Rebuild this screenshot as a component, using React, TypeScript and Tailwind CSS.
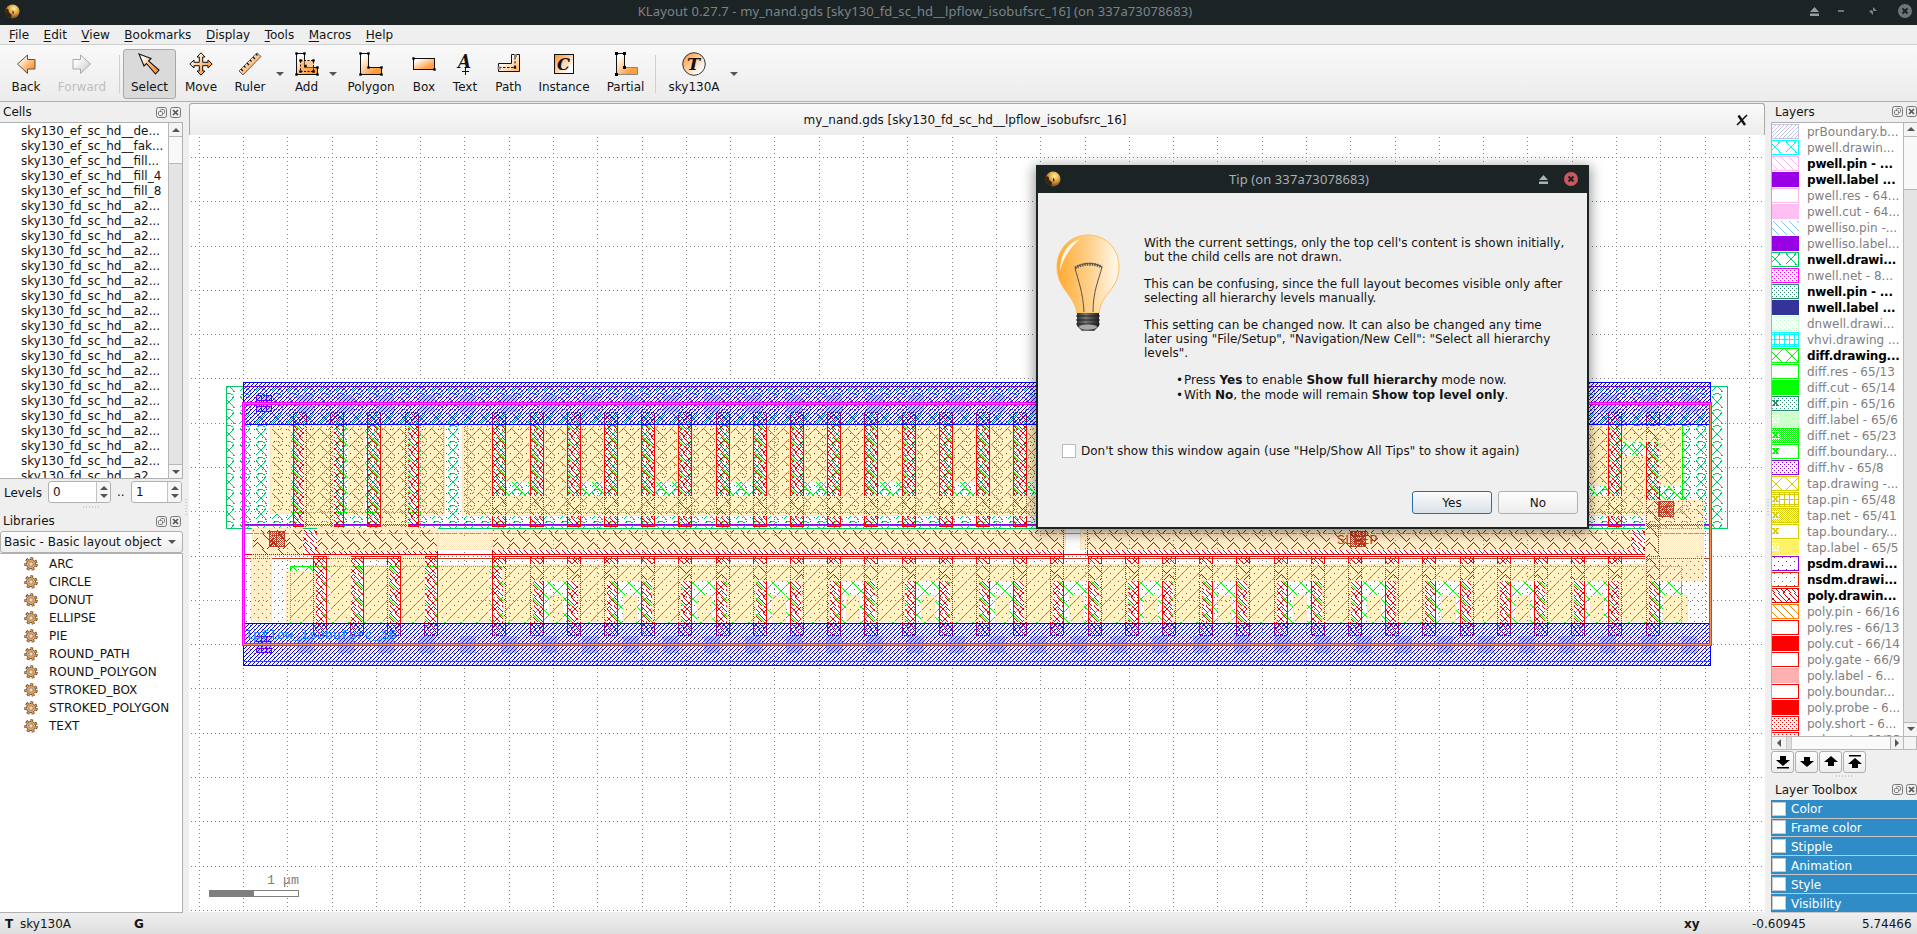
import React from "react";

type Pred = (x: number, y: number) => boolean;
const mod = (a: number, n: number) => ((a % n) + n) % n;

function pixels(w: number, h: number, f: Pred) {
  let d = "";
  for (let y = 0; y < h; y++)
    for (let x = 0; x < w; x++) if (f(x, y)) d += `M${x} ${y}h1v1h-1z`;
  return d;
}

function Stipple({ id, n, color, f }: { id: string; n: number; color: string; f: Pred }) {
  return (
    <pattern id={id} width={n} height={n} patternUnits="userSpaceOnUse">
      <path d={pixels(n, n, f)} fill={color} shapeRendering="crispEdges" />
    </pattern>
  );
}

const WELL = [
  "...#......#.....",
  "....#....#......",
  ".....#..#.......",
  "......##........",
  "......##........",
  ".....#..#.......",
  "....#....#......",
  "...#......#.....",
  "..#........#....",
  "...........##...",
  "................",
  ".....####.......",
  "...##....##.....",
  "................",
  "..#........#....",
  "..##......##....",
];
const wellAt =
  (dx: number, dy: number): Pred =>
  (x, y) =>
    WELL[mod(y + dy, 16)][mod(x + dx, 16)] === "#";
const diamondAt =
  (a: number, b: number): Pred =>
  (x, y) =>
    mod(x + y, 16) === a || mod(x - y, 16) === b;
const slash4: Pred = (x, y) => mod(x + y, 4) === 0;
const back5: Pred = (x, y) => mod(x - y, 8) === 0;
const check: Pred = (x, y) => mod(x + y, 2) === 0;
const sparse: Pred = (x, y) => (x === 2 && y === 1) || (x === 6 && y === 5);
const dots4: Pred = (x, y) => (x === 0 && y === 0) || (x === 2 && y === 2);
const net: Pred = (x, y) => x % 5 === 2 || y % 5 === 2;
// Broken left hatch with a short counter stroke in each half of the tile.
const poly: Pred = (x, y) => {
  const back = mod(x - y, 16);
  const fwd = mod(x + y, 16);
  if (y >= 5 && y <= 13) return back === 1 || back === 6 || back === 12 || (fwd === 11 && y >= 10);
  return back === 3 || back === 8 || back === 14 || fwd === 15;
};

const FONT = "font-['DejaVu_Sans',sans-serif]";

function Defs() {
  return (
    <svg className="absolute h-0 w-0">
      <defs>
        <Stipple id="well" n={16} color="#00cc66" f={wellAt(2, 2)} />
        <Stipple id="wellG" n={16} color="#00cc66" f={wellAt(4, -3)} />
        <Stipple id="wellC" n={16} color="#00ffff" f={wellAt(4, -3)} />
        <Stipple id="diff" n={16} color="#00ff00" f={diamondAt(11, 14)} />
        <Stipple id="diffG" n={16} color="#00ff00" f={diamondAt(11, 12)} />
        <Stipple id="diffY" n={16} color="#d9cc00" f={diamondAt(11, 12)} />
        <Stipple id="met" n={4} color="#0000ff" f={slash4} />
        <Stipple id="prb" n={4} color="#c4c4dc" f={slash4} />
        <Stipple id="backP" n={8} color="#ffb8f0" f={back5} />
        <Stipple id="backB" n={8} color="#80bfff" f={back5} />
        <Stipple id="backO" n={8} color="#ff8000" f={back5} />
        <Stipple id="li" n={2} color="#ffe6bf" f={check} />
        <Stipple id="liDiff" n={2} color="#ffebba" f={check} />
        <Stipple id="checkG" n={2} color="#00ff00" f={check} />
        <Stipple id="checkY" n={2} color="#d9cc00" f={check} />
        <Stipple id="checkBr" n={2} color="#bf4026" f={check} />
        <Stipple id="sparseP" n={8} color="#9900e6" f={sparse} />
        <Stipple id="sparseR" n={8} color="#bf4026" f={sparse} />
        <Stipple id="dotsM" n={4} color="#ff00ff" f={dots4} />
        <Stipple id="dotsT" n={4} color="#268c6b" f={dots4} />
        <Stipple id="dotsL" n={4} color="#ccffd9" f={dots4} />
        <Stipple id="dotsV" n={4} color="#9900e6" f={dots4} />
        <Stipple id="dotsR" n={4} color="#ff0000" f={dots4} />
        <Stipple id="netC" n={5} color="#00ffff" f={net} />
        <Stipple id="netY" n={5} color="#d9cc00" f={net} />
        <Stipple id="poly" n={16} color="#e60000" f={poly} />
        <linearGradient id="or" x1="0" y1="0" x2="1" y2="1">
          <stop offset="0.15" stopColor="#fff" />
          <stop offset="0.75" stopColor="#ff9d3c" />
        </linearGradient>
        <linearGradient id="orR" x1="1" y1="1" x2="0" y2="0">
          <stop offset="0.2" stopColor="#fff" />
          <stop offset="0.9" stopColor="#ff9d3c" />
        </linearGradient>
        <linearGradient id="orSoft" x1="0" y1="0" x2="1" y2="1">
          <stop offset="0.3" stopColor="#fff" />
          <stop offset="1" stopColor="#ffb060" />
        </linearGradient>
        <linearGradient id="gy" x1="0" y1="0" x2="1" y2="1">
          <stop offset="0.2" stopColor="#fff" />
          <stop offset="1" stopColor="#c8c8c8" />
        </linearGradient>
        <radialGradient id="gold" cx="0.6" cy="0.3" r="0.8">
          <stop offset="0" stopColor="#fff0a0" />
          <stop offset="0.45" stopColor="#e0a040" />
          <stop offset="1" stopColor="#4a2c10" />
        </radialGradient>
        <linearGradient id="bulb" x1="0" y1="0" x2="1" y2="0">
          <stop offset="0" stopColor="#ffa92e" />
          <stop offset="0.55" stopColor="#ffd391" />
          <stop offset="1" stopColor="#fffaf2" />
        </linearGradient>
        <linearGradient id="screw" x1="0" y1="0" x2="1" y2="0">
          <stop offset="0" stopColor="#333" />
          <stop offset="0.4" stopColor="#777" />
          <stop offset="1" stopColor="#222" />
        </linearGradient>
      </defs>
    </svg>
  );
}

/* ---------- layout view ---------- */

const P = 44.29;
function gridPath() {
  let d = "";
  for (let k = -1; k <= 34; k++) {
    const x = Math.round(243 + P * k);
    for (let j = -6; j < 190; j++) {
      const y = Math.round(157 + (P / 11) * j);
      d += `M${x} ${y}h1v1h-1z`;
    }
  }
  for (let k = 0; k <= 17; k++) {
    const y = Math.round(157 + P * k);
    for (let j = -14; j < 380; j++) {
      const x = Math.round(243 + (P / 11) * j);
      d += `M${x} ${y}h1v1h-1z`;
    }
  }
  return d;
}

type Box = [number, number, number, number];
function Boxes({ list, fill, stroke }: { list: Box[]; fill: string; stroke?: string }) {
  return (
    <>
      {list.map(([x0, y0, x1, y1], i) => (
        <rect
          key={i}
          x={x0 + 0.5}
          y={y0 + 0.5}
          width={x1 - x0}
          height={y1 - y0}
          fill={fill}
          stroke={stroke ?? "none"}
        />
      ))}
    </>
  );
}

const gateX = (k: number) => Math.round(492.3 + 37.2 * k);
const gates = Array.from({ length: 32 }, (_, k) => gateX(k));
const topGates: Box[] = [293, 330, 367, 405, ...gates].map((x) => [x, 412, x + 13, 526]);
const botGates: Box[] = [313, 350, 387, 424, ...gates].map((x) => [x, 556, x + 13, 635]);

const liTop: Box[] = [
  [270, 425, 290, 513],
  [304, 425, 333, 527],
  [348, 425, 364, 515],
  [381, 425, 407, 527],
  [421, 425, 444, 515],
  [462, 425, 491, 496],
  [462, 496, 1644, 515],
];
const liBot: Box[] = [
  [286, 571, 315, 621],
  [330, 556, 350, 621],
  [364, 565, 388, 621],
  [401, 556, 424, 621],
  [438, 565, 488, 621],
  [502, 564, 1644, 580],
  [1663, 595, 1687, 621],
];
for (let k = 0; k < 31; k++) {
  const a = gateX(k) + 14;
  const b = gateX(k + 1) - 1;
  if (k === 30) {
    liTop.push([a, 426, b + 24, 441], [a, 456, b, 496]);
  } else if (k === 29) {
    liTop.push([a, 425, b, 485]);
  } else liTop.push([a, 425, b, k % 2 === 0 ? 481 : 496]);
  if (k % 2 === 0) liBot.push([a - 3, 580, b + 3, 621]);
  else liBot.push([a + 5, 595, b - 4, 621]);
}
liTop.push([1659, 426, 1681, 485]);

const liMid: Box[] = [
  [252, 528, 302, 555],
  [317, 528, 437, 550],
  [438, 531, 491, 549],
  [492, 529, 1065, 549],
  [1080, 529, 1630, 549],
  [251, 555, 271, 621],
  [1645, 500, 1703, 580],
];

const contacts: number[] = Array.from({ length: 35 }, (_, i) => Math.round(297 + 40.72 * i));

function LayoutView() {
  return (
    <svg
      className="block h-[777px] w-[1576px] bg-white"
      viewBox="189 135 1576 777"
      shapeRendering="crispEdges"
    >
      <path d={gridPath()} fill="#7f7f7f" />
      <Boxes list={[[226, 386, 1727, 528]]} fill="url(#well)" stroke="#00cc66" />
      <Boxes list={[[290, 424, 443, 512], [467, 424, 1682, 512], [290, 566, 1681, 623]]} fill="url(#diff)" stroke="#00ff00" />
      <Boxes list={[[243, 386, 1710, 524]]} fill="url(#sparseP)" stroke="#9900e6" />
      <Boxes list={[[243, 525, 1710, 661]]} fill="none" stroke="#bf4026" />
      <Boxes list={[[243, 558, 1710, 661]]} fill="url(#sparseR)" />
      <path d="M243 558.5H1710" stroke="#bf4026" />
      <path d="M243 528.5H1710" stroke="#00cc66" strokeDasharray="8 3" />
      <path d="M243 533.5H1710" stroke="#ff8000" strokeDasharray="7 1" />
      <Boxes list={[[252, 529, 437, 554], [492, 529, 1063, 554], [1087, 529, 1645, 554]]} fill="url(#poly)" />
      <Boxes list={topGates} fill="url(#poly)" stroke="#ff0000" />
      <Boxes list={botGates} fill="url(#poly)" stroke="#ff0000" />
      <Boxes list={[[1645, 526, 1658, 556]]} fill="url(#poly)" stroke="#ff0000" />
      <path
        d="M243 554.5H1645 M492.5 529V556 M437.5 529V556 M1063.5 529V556 M1087.5 529V556 M252.5 529V554 M363 556.5H388 M506 556.5H1050 M1100 556.5H1645"
        stroke="#e60000"
        fill="none"
      />
      <Boxes list={liTop} fill="url(#liDiff)" stroke="#ffe6bf" />
      <Boxes list={liMid} fill="url(#li)" stroke="#ffe6bf" />
      <Boxes list={liBot} fill="url(#liDiff)" stroke="#ffe6bf" />
      <Boxes list={[[243, 394, 1710, 413], [243, 634, 1710, 653]]} fill="url(#li)" />
      <path d="M243 533.5H1710" stroke="#ff8000" strokeDasharray="4 2" />
      {contacts.map((x) => (
        <React.Fragment key={x}>
          <rect x={x} y="395" width="16" height="17" fill="#ccccf0" />
          <rect x={x} y="636" width="16" height="17" fill="#ccccf0" />
        </React.Fragment>
      ))}
      <rect x="256" y="395" width="16" height="17" fill="#ccccf0" />
      <rect x="256" y="636" width="16" height="17" fill="#ccccf0" />
      <Boxes list={[[243, 382, 1710, 424], [243, 623, 1710, 665]]} fill="url(#met)" stroke="#0000ff" />
      <path d="M243 661.5H1710" stroke="#99336b" />
      <path d="M243 386.5H1710" stroke="#6600e6" />
      <path
        d="M256 395.5h5M263 395.500h9M256 400.5h16M256 406.5h16M256 411.5h16M256.5 395v17M261.5 395v17M266.5 395v17M271.5 395v17M256 636.5h16M256 641.5h16M256 648.5h16M256 652.5h16M256.5 648v5M261.5 636v17M266.5 636v17M271.5 648v5"
        stroke="#6600ff"
      />
      <Boxes list={[[269, 531, 284, 546], [1350, 531, 1365, 546], [1658, 501, 1673, 516]]} fill="url(#checkBr)" stroke="#bf4026" />
      <path d="M272 535h10M272 541h8M276 533v12M281 534v6M1353 536h11M1353 541h11M1355 532v14M1361 532v14M1661 506h10M1661 512h8M1666 504v10" stroke="#bf4026" strokeWidth="1" />
      <text x="1337" y="543.5" fontSize="13.5" className="font-['Liberation_Mono',monospace]" fill="#bf4026">SLEEP</text>
      <text x="245" y="639" fontSize="13.3" className="font-['Liberation_Mono',monospace]" fill="#0080ff">lpflow_isobufsrc_16</text>
      <rect x="243.5" y="403.5" width="1467" height="241" fill="none" stroke="#ff00ff" strokeWidth="3" />
      <rect x="243.5" y="403.5" width="1467" height="241" fill="none" stroke="#ff9050" strokeWidth="1" />
      <text x="267" y="884" fontSize="13.3" className="font-['Liberation_Mono',monospace]" fill="#7f7f7f">1 μm</text>
      <rect x="209.5" y="890.5" width="89" height="6" fill="#fff" stroke="#7f7f7f" />
      <rect x="209" y="890" width="45" height="7" fill="#7f7f7f" />
    </svg>
  );
}

/* ---------- toolbar ---------- */

function Handle({ pts }: { pts: [number, number][] }) {
  return (
    <>
      {pts.map(([x, y], i) => (
        <rect key={i} x={x - 1.2} y={y - 1.2} width="2.4" height="2.4" fill="#000" />
      ))}
    </>
  );
}

const icons: Record<string, React.ReactNode> = {
  Back: <path d="M3.5 12 13.5 3v4.500h7.500v9.500h-7.500v4.500z" fill="url(#or)" stroke="#555" />,
  Forward: <path d="M20.500 12 10.500 3v4.500H3v9.500h7.500v4.500z" fill="url(#gy)" stroke="#aaa" />,
  Select: <path d="M1 2 13 6.500 10.500 9l10.500 9-3.500 4L8.500 11.500 6 14z" fill="url(#or)" stroke="#111" strokeWidth="1.100" />,
  Move: <path d="M12 .8 16 5H13.700v5.300H19V8l4.200 4L19 16v-2.300h-5.300V19H16l-4 4.200L8 19h2.300v-5.300H5V16L.8 12 5 8v2.300h5.300V5H8z" fill="url(#or)" stroke="#111" />,
  Ruler: (
    <g>
      <path d="M1 19 19 .8 23 4.500 5 23z" fill="url(#or)" stroke="#666" />
      <path d="m3 17 2 2M6 14l1.500 1.500M9 11l2 2M12 8l1.500 1.500M15 5l2 2M18 2l1.500 1.500" stroke="#111" strokeWidth="1.200" />
    </g>
  ),
  Add: (
    <g>
      <path d="M1.500 1.500h8v14h13v7h-21z" fill="url(#or)" stroke="#111" />
      <path d="M5.500 8.500h13v11h-13z" fill="#ff9d3c" fillOpacity="0.500" stroke="#111" strokeDasharray="2 1.500" />
      <Handle pts={[[1.5, 1.5], [9.5, 1.5], [1.5, 22.5], [22.5, 22.5], [22.5, 15.5], [5.5, 8.5], [18.5, 8.5], [5.5, 19.5], [18.5, 19.5], [10.5, 14]]} />
    </g>
  ),
  Polygon: (
    <g>
      <path d="M1.500 1.500h8v14h13v7h-21z" fill="url(#or)" stroke="#111" />
      <Handle pts={[[1.5, 1.5], [9.5, 1.5], [9.5, 15.5], [1.5, 22.5], [22.5, 22.5], [22.5, 15.5]]} />
    </g>
  ),
  Box: (
    <g>
      <rect x="1.500" y="6.500" width="21" height="11" fill="url(#or)" stroke="#111" />
      <Handle pts={[[1.5, 6.5], [22.5, 17.5]]} />
    </g>
  ),
  Text: (
    <g>
      <text x="5" y="16" fontSize="18" className="font-['DejaVu_Serif',serif]" fontWeight="700" fontStyle="italic" textLength="13" lengthAdjust="spacingAndGlyphs" fill="#111">A</text>
      <path d="M12.500 16v7M9 19.500h7" stroke="#111" />
    </g>
  ),
  Path: (
    <g>
      <path d="M1.500 11.500h13v-9h8v17h-21z" fill="url(#orSoft)" stroke="#111" />
      <path d="M2 15.500h16V3" fill="none" stroke="#111" strokeDasharray="2.500 1.500" />
      <Handle pts={[[18, 15.5]]} />
      <path d="M17 2h3v3h-3zM.5 14.500h3v3h-3z" fill="#888" />
    </g>
  ),
  Instance: (
    <g>
      <rect x="2.500" y="2.500" width="19" height="19" fill="url(#orR)" stroke="#111" />
      <text x="5" y="17.500" fontSize="16" className="font-['DejaVu_Serif',serif]" fontWeight="700" fontStyle="italic" textLength="13" lengthAdjust="spacingAndGlyphs" fill="#111">C</text>
    </g>
  ),
  Partial: (
    <g>
      <path d="M2.500 1.500h8v14h13v7h-21z" fill="url(#or)" />
      <path d="M10.500 15.500h13v7h-21" fill="none" stroke="#888" />
      <path d="M2.500 22.500v-21h8v14" fill="none" stroke="#111" />
      <rect x="1" y="0" width="3" height="3" />
      <rect x="9" y="0" width="3" height="3" />
      <rect x="9" y="14" width="3" height="3" />
      <rect x="1" y="21" width="3" height="3" />
    </g>
  ),
  sky130A: (
    <g>
      <circle cx="12" cy="12" r="11.300" fill="url(#orR)" stroke="#333" />
      <text x="5" y="17.500" fontSize="16" className="font-['DejaVu_Serif',serif]" fontWeight="700" fontStyle="italic" textLength="13" lengthAdjust="spacingAndGlyphs" fill="#111">T</text>
    </g>
  ),
};

function Tool({ name, w, state }: { name: string; w: string; state?: "on" | "off" }) {
  return (
    <div
      className={`flex h-[50px] flex-col items-center border pt-[2px] ${w} ${
        state === "on" ? "rounded-[3px] border-[#a8a8a8] bg-[#dadada]" : "border-transparent"
      }`}
    >
      <svg width="24" height="24" viewBox="0 0 24 24">{icons[name]}</svg>
      <span className={`mt-[3px] leading-[16px] whitespace-nowrap ${state === "off" ? "text-[#bebebe]" : ""}`}>{name}</span>
    </div>
  );
}

const Drop = ({ w }: { w: string }) => (
  <div className={`flex h-[50px] justify-center pt-[23px] ${w}`}>
    <svg width="8" height="4"><path d="M0 0h8L4 4z" fill="#555" /></svg>
  </div>
);

function Toolbar() {
  return (
    <div className="flex h-[57px] border-b border-[#b0b0b0] bg-linear-to-b from-[#f9f9f9] to-[#ececec] pt-[4px]">
      <Tool name="Back" w="w-[52px]" />
      <Tool name="Forward" w="w-[60px]" state="off" />
      <div className="mt-[6px] mr-[3px] ml-[7px] h-[38px] w-px bg-[#cfcfcf]" />
      <Tool name="Select" w="w-[53px]" state="on" />
      <Tool name="Move" w="w-[50px]" />
      <Tool name="Ruler" w="w-[48px]" />
      <Drop w="w-[12px]" />
      <Tool name="Add" w="w-[41px]" />
      <Drop w="w-[12px]" />
      <Tool name="Polygon" w="w-[64px]" />
      <Tool name="Box" w="w-[42px]" />
      <Tool name="Text" w="w-[40px]" />
      <Tool name="Path" w="w-[47px]" />
      <Tool name="Instance" w="w-[64px]" />
      <Tool name="Partial" w="w-[59px]" />
      <div className="mt-[6px] mr-[3px] h-[38px] w-px bg-[#cfcfcf]" />
      <Tool name="sky130A" w="w-[70px]" />
      <Drop w="w-[10px]" />
    </div>
  );
}

/* ---------- shared bits ---------- */

const Logo = ({ s }: { s: number }) => (
  <svg width={s} height={s} viewBox="0 0 16 16">
    <circle cx="8" cy="8" r="7.500" fill="url(#gold)" />
    <path d="M1 6c2-2 3 0 3 2s3 2 3 4-1 3-2 3C2 13 0 10 1 6zM8 7c1 0 2 2 1 4l-1-1z" fill="#3a2410" />
  </svg>
);

function DockHeader({ title, pad }: { title: string; pad: string }) {
  return (
    <div className={`flex h-[20px] items-center justify-between ${pad}`}>
      <span className="leading-[16px]">{title}</span>
      <svg width="25" height="11" viewBox="0 0 25 11" fill="none" stroke="#777">
        <rect x=".5" y=".5" width="10" height="10" rx="2" />
        <rect x="4.500" y="2.500" width="4" height="4" rx="1" />
        <rect x="2.500" y="4.500" width="4" height="4" rx="1" fill="#efefef" />
        <rect x="14.500" y=".5" width="10" height="10" rx="2" />
        <path d="m17 3 5 5m0-5-5 5" stroke="#555" strokeWidth="1.700" />
      </svg>
    </div>
  );
}

const Tri = ({ dir, c = "#555" }: { dir: "u" | "d" | "l" | "r"; c?: string }) => (
  <svg width="8" height="8" viewBox="0 0 8 8">
    <path d={{ u: "M0 6h8L4 2z", d: "M0 2h8L4 6z", l: "M6 0v8L2 4z", r: "M2 0v8l4-4z" }[dir]} fill={c} />
  </svg>
);

function VScroll({ thumb }: { thumb: string }) {
  return (
    <div className="flex w-[14px] shrink-0 flex-col border-l border-[#b8b8b8] bg-[#e4e4e4]">
      <div className="flex h-[14px] items-center justify-center border-b border-[#b8b8b8] bg-[#f4f4f4]"><Tri dir="u" /></div>
      <div className={`border-b border-[#b8b8b8] bg-[#f8f8f8] ${thumb}`} />
      <div className="grow" />
      <div className="flex h-[14px] items-center justify-center border-t border-[#b8b8b8] bg-[#f4f4f4]"><Tri dir="d" /></div>
    </div>
  );
}

const Grip = () => (
  <svg width="17" height="2"><path d="M0 1h17" stroke="#aaa" strokeDasharray="1 2" /></svg>
);

/* ---------- left side ---------- */

const cells = ["ef_sc_hd__de...", "ef_sc_hd__fak...", "ef_sc_hd__fill...", "ef_sc_hd__fill_4", "ef_sc_hd__fill_8", ...Array(19).fill("fd_sc_hd__a2...")];
const shapes = ["ARC", "CIRCLE", "DONUT", "ELLIPSE", "PIE", "ROUND_PATH", "ROUND_POLYGON", "STROKED_BOX", "STROKED_POLYGON", "TEXT"];

function Spin({ value, w }: { value: string; w: string }) {
  return (
    <div className={`flex h-[22px] overflow-hidden rounded-[3px] border border-[#b0b0b0] bg-white ${w}`}>
      <span className="grow pl-[4px] leading-[20px]">{value}</span>
      <span className="flex w-[14px] flex-col items-center justify-center border-l border-[#c4c4c4] bg-[#f6f6f6]">
        <Tri dir="u" /><Tri dir="d" />
      </span>
    </div>
  );
}

const Gear = () => (
  <svg width="14" height="14" viewBox="0 0 14 14">
    <circle cx="7" cy="7" r="5.200" fill="none" stroke="#4a3a2a" strokeWidth="3" strokeDasharray="2.600 2.070" />
    <circle cx="7" cy="7" r="4.600" fill="#f2a452" stroke="#5a4632" strokeWidth=".8" />
    <circle cx="7" cy="7" r="5.200" fill="none" stroke="#f2a452" strokeWidth="1.600" strokeDasharray="1.600 3.070" strokeDashoffset="-.5" />
    <circle cx="7" cy="7" r="2.200" fill="#ddd" stroke="#888" />
  </svg>
);

function LeftDock() {
  return (
    <div className="flex w-[183px] flex-col">
      <DockHeader title="Cells" pad="pl-[3px] pr-[2px]" />
      <div className="flex h-[357px] border-y border-r border-[#b0b0b0] bg-white">
        <div className="grow overflow-hidden pl-[21px]">
          {cells.map((c, i) => (
            <div key={i} className="h-[15px] leading-[16px] whitespace-nowrap">sky130_{c}</div>
          ))}
        </div>
        <VScroll thumb="h-[27px]" />
      </div>
      <div className="mt-[2px] flex h-[22px] items-center">
        <span className="w-[48px] pt-px pl-[4px]">Levels</span>
        <Spin value="0" w="w-[63px]" />
        <span className="w-[20px] pl-[6px]">..</span>
        <Spin value="1" w="w-[51px]" />
      </div>
      <div className="flex h-[8px] items-center justify-center"><Grip /></div>
      <DockHeader title="Libraries" pad="pl-[3px] pr-[2px]" />
      <div className="flex h-[22px] items-center justify-between overflow-hidden rounded-[3px] border border-[#b0b0b0] bg-linear-to-b from-[#fdfdfd] to-[#ededed] pr-[6px] pl-[3px]">
        <span className="whitespace-nowrap">Basic - Basic layout object</span>
        <Tri dir="d" />
      </div>
      <div className="h-[360px] border-y border-r border-[#b0b0b0] bg-white pt-[1px]">
        {shapes.map((s) => (
          <div key={s} className="flex h-[18px] items-center pl-[24px]">
            <Gear /><span className="pl-[11px]">{s}</span>
          </div>
        ))}
      </div>
    </div>
  );
}

/* ---------- right side ---------- */

// name, fill, frame, bold, marker colour
const layers: [string, string, string, boolean?, string?][] = [
  ["prBoundary.b...", "url(#prb)", "#c4c4dc"],
  ["pwell.drawin...", "url(#wellC)", "#00ffff"],
  ["pwell.pin - ...", "url(#backP)", "#ffb8f0", true],
  ["pwell.label ...", "#9900e6", "#9900e6", true],
  ["pwell.res - 64...", "#fff", "#ffb8f0"],
  ["pwell.cut - 64...", "#ffbff2", "#ffbff2"],
  ["pwelliso.pin -...", "url(#backB)", "none"],
  ["pwelliso.label...", "#9900e6", "#9900e6"],
  ["nwell.drawi...", "url(#wellG)", "#00cc66", true],
  ["nwell.net - 8...", "url(#dotsM)", "#ff00ff"],
  ["nwell.pin - ...", "url(#dotsT)", "#268c6b", true],
  ["nwell.label ...", "#333399", "#333399", true],
  ["dnwell.drawi...", "url(#dotsL)", "#ccffd9"],
  ["vhvi.drawing ...", "url(#netC)", "#00ffff"],
  ["diff.drawing...", "url(#diffG)", "#00ff00", true],
  ["diff.res - 65/13", "#fff", "#00ff00"],
  ["diff.cut - 65/14", "#00ff00", "#00ff00"],
  ["diff.pin - 65/16", "url(#dotsT)", "#268c6b", false, "#268c6b"],
  ["diff.label - 65/6", "#ccffcc", "#ccffcc", false, "#ccffcc"],
  ["diff.net - 65/23", "url(#checkG)", "#00ff00", false, "#00ff00"],
  ["diff.boundary...", "#fff", "#00ff00", false, "#00ff00"],
  ["diff.hv - 65/8", "url(#dotsV)", "#9900e6"],
  ["tap.drawing -...", "url(#diffY)", "#d9cc00"],
  ["tap.pin - 65/48", "url(#netY)", "#d9cc00", false, "#d9cc00"],
  ["tap.net - 65/41", "url(#checkY)", "#d9cc00", false, "#d9cc00"],
  ["tap.boundary...", "#fff", "#d9cc00", false, "#d9cc00"],
  ["tap.label - 65/5", "#fff266", "#fff266", false, "#fff266"],
  ["psdm.drawi...", "url(#sparseP)", "#9900e6", true],
  ["nsdm.drawi...", "url(#sparseR)", "#e62600", true],
  ["poly.drawin...", "url(#poly)", "#e60000", true],
  ["poly.pin - 66/16", "url(#backO)", "#ff8000"],
  ["poly.res - 66/13", "#fff", "#ff0000"],
  ["poly.cut - 66/14", "#ff0000", "#ff0000"],
  ["poly.gate - 66/9", "#fff", "#ff0000"],
  ["poly.label - 6...", "#ffb0b0", "#ffb0b0"],
  ["poly.boundar...", "#fff", "#ff0000"],
  ["poly.probe - 6...", "#ff0000", "#ff0000"],
  ["poly.short - 6...", "url(#dotsR)", "#ff0000"],
  ["poly.net - 66/23", "url(#dotsR)", "#ff0000"],
];

function RightDock() {
  return (
    <div className="flex w-[146px] flex-col">
      <DockHeader title="Layers" pad="pl-[4px]" />
      <div className="flex h-[614px] border-t border-l border-[#b0b0b0] bg-white">
        <div className="w-[132px] overflow-hidden pt-px">
          {layers.map(([name, fill, frame, bold, mark]) => (
            <div key={name} className="flex h-[16px]">
              <svg width="27" height="15" className="shrink-0" shapeRendering="crispEdges">
                <rect x="-.5" y=".5" width="27" height="14" fill={fill} stroke={frame} />
                {mark && (
                  <g>
                    <rect x="0" y="3" width="7" height="8" fill="#fff" />
                    <path d="m1 4 5 6m0-6-5 6" stroke={mark} strokeWidth="1.800" />
                  </g>
                )}
              </svg>
              <span className={`pl-[8px] leading-[16px] whitespace-nowrap ${bold ? "font-bold tracking-[-0.2px] text-black" : "text-[#808080]"}`}>{name}</span>
            </div>
          ))}
        </div>
        <VScroll thumb="h-[53px]" />
      </div>
      <div className="flex h-[14px] border border-[#b8b8b8] bg-[#f4f4f4]">
        <div className="flex w-[14px] items-center justify-center"><Tri dir="l" /></div>
        <div className="w-[6px] border-x border-[#c8c8c8] bg-[#e0e0e0]" />
        <div className="w-[99px] border-r border-[#b8b8b8] bg-[#fafafa]" />
        <div className="flex w-[13px] items-center justify-center border-r border-[#b8b8b8]"><Tri dir="r" /></div>
      </div>
      <div className="mt-[1px] flex gap-[1px]">
        {["M4 2h6v4h4l-7 6-7-6h4zM1 13h12v1.500H1z", "M4 3h6v4h4l-7 6-7-6h4z", "M4 12h6V8h4L7 2 0 8h4z", "M4 14h6v-4h4L7 4l-7 6h4zM1 1h12v1.500H1z"].map((d) => (
          <div key={d} className="flex h-[22px] w-[23px] items-center justify-center rounded-[3px] border border-[#b0b0b0] bg-linear-to-b from-[#fdfdfd] to-[#ededed]">
            <svg width="14" height="15" viewBox="0 0 14 15"><path d={d} /></svg>
          </div>
        ))}
      </div>
      <div className="flex h-[7px] items-center justify-center"><Grip /></div>
      <DockHeader title="Layer Toolbox" pad="pl-[4px]" />
      {["Color", "Frame color", "Stipple", "Animation", "Style", "Visibility"].map((t) => (
        <div key={t} className="flex h-[19px] items-center border-b border-[#c8c8c8] bg-[#308cc6] pl-[1px] text-white">
          <div className="size-[14px] border border-[#c8c8c8] bg-white" />
          <span className="pt-px pl-[5px]">{t}</span>
        </div>
      ))}
    </div>
  );
}

/* ---------- dialog ---------- */

const Bulb = () => (
  <svg width="64" height="98" viewBox="0 0 64 98">
    <path d="M32 1C14 1 1 15 1 33c0 16 9 23 15 33 3 5 4 8 5 13h22c1-6 2-9 5-14 6-9 15-16 15-32C63 15 50 1 32 1z" fill="url(#bulb)" stroke="#ffbe5c" />
    <path d="M28 78C27 58 22 46 19 34c8-6 19-6 27-1-3 12-9 24-9 45" fill="none" stroke="#555" />
    <path d="M19 34c8-5 19-5 27-1" fill="none" stroke="#555" strokeWidth="3" strokeDasharray="1.500 1" />
    <path d="M4 37C4 20 12 9 24 5c-9 8-16 17-20 32z" fill="#fff" fillOpacity=".9" />
    <path d="M21 79h22v13l-5 5H26l-5-5z" fill="url(#screw)" />
    <path d="M20 82h24M20 86h24M20 90h24" stroke="#222" />
    <ellipse cx="32" cy="93" rx="9" ry="2.500" fill="#a8a8a8" />
  </svg>
);

function TipDialog() {
  return (
    <div className="absolute top-[165px] left-[1036px] flex h-[364px] w-[553px] flex-col border-x-2 border-b-2 border-[#1c2325] bg-[#efefef] shadow-[0_3px_12px_2px_rgba(0,0,0,0.4)]">
      <div className="flex h-[28px] shrink-0 items-center bg-[#1c2325] pl-[7px]">
        <Logo s={16} />
        <div className="grow pr-[2px] text-center font-['Noto_Sans',sans-serif] text-[13px] tracking-[0.1px] text-[#a7afb4]">Tip (on 337a73078683)</div>
        <svg width="10" height="9" viewBox="0 0 10 9"><path d="M0 5h9L4.500 0zM0 6.500h9V9H0z" fill="#a7b4b4" /></svg>
        <svg width="14" height="14" viewBox="0 0 14 14" className="mr-[9px] ml-[15px]">
          <circle cx="7" cy="7" r="7" fill="#cc575d" />
          <path d="m4.500 4.500 5 5m0-5-5 5" stroke="#1c2325" strokeWidth="2" />
        </svg>
      </div>
      <div className="flex h-[208px] pt-[41px] pl-[18px]">
        <Bulb />
        <div className="ml-[24px] text-[12px] leading-[14px] whitespace-nowrap">
          <p className="pt-[2px]">With the current settings, only the top cell's content is shown initially,<br />but the child cells are not drawn.</p>
          <p className="mt-[13px]">This can be confusing, since the full layout becomes visible only after<br />selecting all hierarchy levels manually.</p>
          <p className="mt-[13px]">This setting can be changed now. It can also be changed any time<br />later using "File/Setup", "Navigation/New Cell": "Select all hierarchy<br />levels".</p>
          <div className="mt-[13px] pl-[32px] leading-[15px]">
            <p className="flex"><span className="w-[8px]">•</span><span>Press <b>Yes</b> to enable <b>Show full hierarchy</b> mode now.</span></p>
            <p className="flex"><span className="w-[8px]">•</span><span>With <b>No</b>, the mode will remain <b>Show top level only</b>.</span></p>
          </div>
        </div>
      </div>
      <div className="mt-[42px] flex items-center pl-[24px]">
        <div className="size-[14px] border border-[#bbb] bg-white" />
        <span className="pl-[5px] leading-[16px] whitespace-nowrap">Don't show this window again (use "Help/Show All Tips" to show it again)</span>
      </div>
      <div className="mt-[32px] flex justify-end gap-[6px] pr-[9px]">
        <div className="flex h-[23px] w-[80px] items-center justify-center rounded-[3px] border border-[#2a6f9e] bg-linear-to-b from-[#fbfcfd] to-[#d9e2e8]">Yes</div>
        <div className="flex h-[23px] w-[80px] items-center justify-center rounded-[3px] border border-[#b0b0b0] bg-linear-to-b from-[#fdfdfd] to-[#ededed]">No</div>
      </div>
    </div>
  );
}

/* ---------- window ---------- */

const menus = ["File", "Edit", "View", "Bookmarks", "Display", "Tools", "Macros", "Help"];

export default function App() {
  return (
    <div className={`relative flex h-[934px] w-[1917px] flex-col overflow-hidden bg-[#efefef] text-[12px] leading-[16px] text-[#141414] ${FONT}`}>
      <Defs />
      <div className="flex h-[25px] shrink-0 items-center bg-[#1c2325] pb-[3px] pl-[5px]">
        <Logo s={15} />
        <div className="grow text-center font-['Noto_Sans',sans-serif] text-[13px] tracking-[0.12px] text-[#7c8488]">
          KLayout 0.27.7 - my_nand.gds [sky130_fd_sc_hd__lpflow_isobufsrc_16] (on 337a73078683)
        </div>
        <svg width="104" height="14" viewBox="0 0 104 14" className="mr-[3px]">
          <path d="M0 8h9L4.500 3zM0 9.500h9V12H0z" fill="#94a0a0" />
          <path d="M28 6h6v2h-6z" fill="#6c7577" />
          <path d="M63 3v4h4zM59 7h4v4zM59 7l3-1v1zM67 7l-4 1z" fill="#7c8484" />
          <circle cx="95" cy="7" r="7" fill="#6c7577" />
          <path d="m92.500 4.500 5 5m0-5-5 5" stroke="#1c2325" strokeWidth="2" />
        </svg>
      </div>
      <div className="flex h-[20px] shrink-0 items-center gap-[14.5px] border-b border-[#d0d0d0] pl-[9px]">
        {menus.map((m) => (
          <span key={m}><span className="underline underline-offset-2">{m[0]}</span>{m.slice(1)}</span>
        ))}
      </div>
      <Toolbar />
      <div className="flex h-[811px] shrink-0">
        <LeftDock />
        <div className="flex w-[6px] items-center justify-center">
          <svg width="2" height="17"><path d="M1 0v17" stroke="#aaa" strokeDasharray="1 2" /></svg>
        </div>
        <div className="flex w-[1576px] flex-col pt-[1px]">
          <div className="flex h-[32px] items-center rounded-t-[3px] border-x border-t border-[#a8a8a8] bg-linear-to-b from-[#fafafa] to-[#ededed]">
            <span className="grow pl-[4px] text-center">my_nand.gds [sky130_fd_sc_hd__lpflow_isobufsrc_16]</span>
            <svg width="12" height="12" viewBox="0 0 12 12" className="mr-[16px]"><path d="M1 11 11 1" stroke="#111" strokeWidth="1.600" /><path d="M2.500 1.500 9 11" stroke="#111" strokeWidth="2.400" /></svg>
          </div>
          <LayoutView />
        </div>
        <div className="flex w-[6px] items-center justify-center">
          <svg width="2" height="17"><path d="M1 0v17" stroke="#aaa" strokeDasharray="1 2" /></svg>
        </div>
        <RightDock />
      </div>
      <div className="flex h-[21px] shrink-0 items-center bg-linear-to-b from-[#efefef] to-[#dedede] pt-px">
        <b className="w-[20px] pl-[5px]">T</b>
        <span className="w-[114px]">sky130A</span>
        <b className="w-[1550px]">G</b>
        <b className="w-[68px]">xy</b>
        <span className="w-[110px]">-0.60945</span>
        <span>5.74466</span>
      </div>
      <TipDialog />
    </div>
  );
}
